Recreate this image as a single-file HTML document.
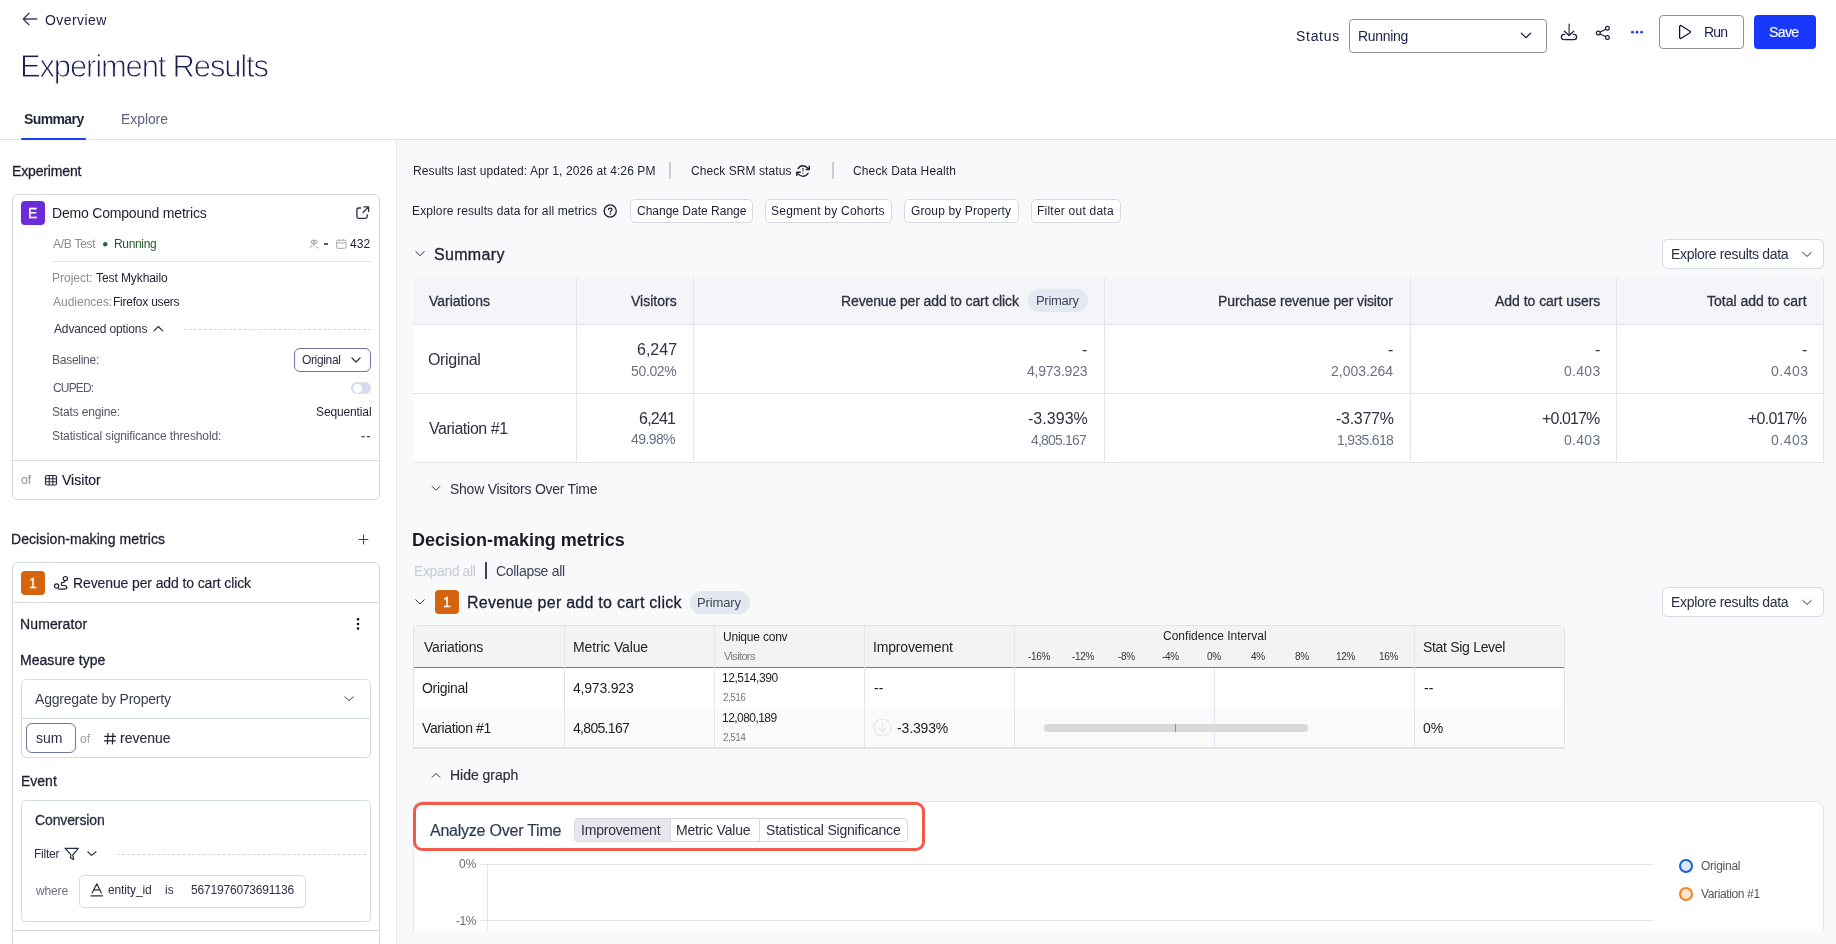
<!DOCTYPE html>
<html><head><meta charset="utf-8"><title>Experiment Results</title>
<style>
html,body{margin:0;padding:0;}
body{width:1836px;height:944px;position:relative;overflow:hidden;background:#ffffff;font-family:"Liberation Sans",sans-serif;}
.t{position:absolute;white-space:nowrap;will-change:transform;}
svg{display:block}
</style></head><body>
<div style="position:absolute;left:397px;top:140px;width:1439px;height:804px;background:#f8f9fb;"></div>
<div style="position:absolute;left:396px;top:140px;width:1px;height:804px;background:#e9ebf1;"></div>
<div style="position:absolute;left:0px;top:139px;width:1836px;height:1px;background:#dde1ee;"></div>
<svg style="position:absolute;left:22px;top:12px;overflow:visible;" width="16" height="14" viewBox="0 0 16 14"><path d="M14.8 7 H1.5 M7 1.2 L1.2 7 L7 12.8" fill="none" stroke="#3b3f63" stroke-width="1.3" stroke-linecap="round" stroke-linejoin="round"/></svg>
<div class="t" style="left:44.60px;top:13px;font-size:14px;line-height:14px;color:#1b1e47;letter-spacing:0.438px;">Overview</div>
<div class="t" style="left:20.00px;top:51px;font-size:31px;line-height:31px;color:#1c1f50;letter-spacing:-1.163px;-webkit-text-stroke:0.9px #ffffff;">Experiment Results</div>
<div class="t" style="left:23.70px;top:112px;font-size:14px;line-height:14px;color:#232838;font-weight:700;letter-spacing:-0.603px;">Summary</div>
<div class="t" style="left:120.60px;top:112px;font-size:14px;line-height:14px;color:#5c6482;letter-spacing:-0.080px;">Explore</div>
<div style="position:absolute;left:21px;top:137.6px;width:65px;height:2.4px;background:#1f3ff5;border-radius:1px;"></div>
<div class="t" style="left:1296.00px;top:29px;font-size:14px;line-height:14px;color:#1b1e47;letter-spacing:0.702px;">Status</div>
<div style="position:absolute;left:1349px;top:19px;width:198px;height:34px;box-sizing:border-box;border:1px solid #8f8f96;border-radius:4px;background:#fff;"></div>
<div class="t" style="left:1357.50px;top:29px;font-size:14px;line-height:14px;color:#1b1e47;letter-spacing:-0.328px;">Running</div>
<svg style="position:absolute;left:1520px;top:32px;overflow:visible;" width="12" height="7" viewBox="0 0 12 7"><path d="M1.3 1.2 L5.9 5.7 L10.5 1.2" fill="none" stroke="#1d2040" stroke-width="1.2" stroke-linecap="round" stroke-linejoin="round"/></svg>
<svg style="position:absolute;left:1560px;top:23px;overflow:visible;" width="18" height="18" viewBox="0 0 18 18"><path d="M9.1 1.1 V12.2" stroke="#1d2040" stroke-width="1.1" stroke-linecap="round"/><path d="M4.4 8.2 L9.1 12.5 L13.7 8.2" fill="none" stroke="#1d2040" stroke-width="1.3" stroke-linecap="round" stroke-linejoin="round"/><path d="M4.6 11.4 H4 A2.6 2.6 0 0 0 4 16.6 H14 A2.6 2.6 0 0 0 14 11.4 H13.3" fill="none" stroke="#1d2040" stroke-width="1.3" stroke-linecap="round"/><rect x="13.4" y="13.4" width="1.1" height="1.1" fill="#6a6c85"/></svg>
<svg style="position:absolute;left:1595px;top:25px;overflow:visible;" width="16" height="16" viewBox="0 0 16 16"><circle cx="3.3" cy="8.1" r="1.9" fill="none" stroke="#1d2040" stroke-width="1.25"/><circle cx="12.4" cy="3.3" r="1.9" fill="none" stroke="#1d2040" stroke-width="1.25"/><circle cx="12.4" cy="12.5" r="1.9" fill="none" stroke="#1d2040" stroke-width="1.25"/><path d="M5 7.2 L10.7 4.2 M5 9 L10.7 11.6" stroke="#1d2040" stroke-width="1.1"/></svg>
<svg style="position:absolute;left:1629px;top:30px;overflow:visible;" width="16" height="5" viewBox="0 0 16 5"><circle cx="3.4" cy="2.2" r="1.4" fill="#1f3ff5"/><circle cx="8" cy="2.2" r="1.4" fill="#1f3ff5"/><circle cx="12.6" cy="2.2" r="1.4" fill="#1f3ff5"/></svg>
<div style="position:absolute;left:1659px;top:15px;width:85px;height:34px;box-sizing:border-box;border:1px solid #8f8f96;border-radius:4px;background:#fff;"></div>
<svg style="position:absolute;left:1678px;top:24px;overflow:visible;" width="14" height="16" viewBox="0 0 14 16"><path d="M1.6 2.7 C1.6 1.7 2.5 1.2 3.3 1.7 L12 7.2 C12.6 7.6 12.6 8.4 12 8.8 L3.3 14.3 C2.5 14.8 1.6 14.3 1.6 13.3 Z" fill="none" stroke="#0f1238" stroke-width="1.3" stroke-linejoin="round"/></svg>
<div class="t" style="left:1704.00px;top:25px;font-size:14px;line-height:14px;color:#1b1e47;letter-spacing:-0.848px;">Run</div>
<div style="position:absolute;left:1754px;top:15px;width:62px;height:34px;background:#1838fb;border-radius:4px;"></div>
<div class="t" style="left:1769.40px;top:25px;font-size:14px;line-height:14px;color:#ffffff;letter-spacing:-0.608px;-webkit-text-stroke:0.15px #ffffff;">Save</div>
<div class="t" style="left:11.50px;top:164px;font-size:14px;line-height:14px;color:#1d2033;letter-spacing:-0.146px;-webkit-text-stroke:0.3px #1d2033;">Experiment</div>
<div style="position:absolute;left:12px;top:194px;width:368px;height:306px;box-sizing:border-box;border:1px solid #d5dbe3;border-radius:5px;background:#fff;"></div>
<div style="position:absolute;left:13px;top:460px;width:366px;height:1px;background:#d5dbe3;"></div>
<div style="position:absolute;left:21px;top:201px;width:24px;height:24px;background:#6c2bd9;border-radius:4px;"></div>
<div class="t" style="left:28.40px;top:206px;font-size:14px;line-height:14px;color:#ffffff;-webkit-text-stroke:0.3px #ffffff;">E</div>
<div class="t" style="left:52.40px;top:206px;font-size:14px;line-height:14px;color:#1d2033;letter-spacing:-0.196px;">Demo Compound metrics</div>
<svg style="position:absolute;left:355px;top:205px;overflow:visible;" width="15" height="15" viewBox="0 0 15 15"><path d="M5.6 3 H3.6 C2.6 3 1.9 3.7 1.9 4.7 V11.6 C1.9 12.6 2.6 13.3 3.6 13.3 H10.5 C11.5 13.3 12.2 12.6 12.2 11.6 V9.6" fill="none" stroke="#2a2f45" stroke-width="1.3" stroke-linecap="round"/><path d="M9 1.9 H13.6 V6.5 M13.4 2.1 L8 7.5" fill="none" stroke="#2a2f45" stroke-width="1.3" stroke-linecap="round" stroke-linejoin="round"/></svg>
<div class="t" style="left:53.40px;top:238px;font-size:12px;line-height:12px;color:#8a8c92;letter-spacing:-0.264px;">A/B Test</div>
<svg style="position:absolute;left:103px;top:242px;overflow:visible;" width="4.5" height="4.5" viewBox="0 0 4.5 4.5"><circle cx="2.25" cy="2.25" r="2.2" fill="#1f6b35"/></svg>
<div class="t" style="left:114.00px;top:238px;font-size:12px;line-height:12px;color:#1f5c2c;letter-spacing:-0.338px;">Running</div>
<svg style="position:absolute;left:308px;top:239px;overflow:visible;" width="12" height="10" viewBox="0 0 12 10"><rect x="3.3" y="1.2" width="3.6" height="3.6" rx="1.6" fill="none" stroke="#8f9198" stroke-width="0.9"/><rect x="5.6" y="1.2" width="3.4" height="3.6" rx="1.2" fill="none" stroke="#8f9198" stroke-width="0.9"/><path d="M1.6 8.8 L5 5.4 L7.5 7.6 M8.4 8.6 L10.8 8.8" fill="none" stroke="#9a9ca5" stroke-width="0.9"/></svg>
<div style="position:absolute;left:324px;top:243px;width:4px;height:2px;background:#555862;"></div>
<svg style="position:absolute;left:336px;top:239px;overflow:visible;" width="11" height="10" viewBox="0 0 11 10"><rect x="0.6" y="1.2" width="9.4" height="8.1" rx="1.2" fill="none" stroke="#a7a9b0" stroke-width="1"/><path d="M0.6 3.9 H10 M3.3 0.4 V1.8 M7.3 0.4 V1.8" stroke="#a7a9b0" stroke-width="1"/></svg>
<div class="t" style="left:350.30px;top:238px;font-size:12px;line-height:12px;color:#1d2033;letter-spacing:0.126px;">432</div>
<div style="position:absolute;left:53px;top:261px;width:318px;height:1px;background:#e2e6ec;"></div>
<div class="t" style="left:52.00px;top:272px;font-size:12px;line-height:12px;color:#8a8c92;">Project:</div>
<div class="t" style="left:96.00px;top:272px;font-size:12px;line-height:12px;color:#1d2033;letter-spacing:-0.085px;">Test Mykhailo</div>
<div class="t" style="left:53.00px;top:296px;font-size:12px;line-height:12px;color:#8a8c92;">Audiences:</div>
<div class="t" style="left:113.00px;top:296px;font-size:12px;line-height:12px;color:#1d2033;letter-spacing:-0.229px;">Firefox users</div>
<div class="t" style="left:54.20px;top:323px;font-size:12px;line-height:12px;color:#2a2f45;letter-spacing:-0.133px;">Advanced options</div>
<svg style="position:absolute;left:153px;top:325px;overflow:visible;" width="11" height="7" viewBox="0 0 11 7"><path d="M1 5.8 L5.3 1.5 L9.6 5.8" fill="none" stroke="#2a2f45" stroke-width="1.2" stroke-linecap="round" stroke-linejoin="round"/></svg>
<div style="position:absolute;left:184px;top:329px;width:187px;height:0;border-top:1px dashed #d5d9e2;"></div>
<div class="t" style="left:52.40px;top:354px;font-size:12px;line-height:12px;color:#545868;letter-spacing:-0.266px;">Baseline:</div>
<div style="position:absolute;left:294px;top:348px;width:77px;height:24px;box-sizing:border-box;border:1px solid #6e7799;border-radius:6px;background:#fff;"></div>
<div class="t" style="left:301.60px;top:354px;font-size:12px;line-height:12px;color:#2a2f45;letter-spacing:-0.355px;">Original</div>
<svg style="position:absolute;left:351px;top:357px;overflow:visible;" width="10" height="6" viewBox="0 0 10 6"><path d="M1 1 L5 5 L9 1" fill="none" stroke="#2a2f45" stroke-width="1.2" stroke-linecap="round" stroke-linejoin="round"/></svg>
<div class="t" style="left:53.40px;top:382px;font-size:12px;line-height:12px;color:#545868;letter-spacing:-0.841px;">CUPED:</div>
<div style="position:absolute;left:351px;top:382px;width:20px;height:12px;background:#d8dcea;border-radius:6px;"></div>
<div style="position:absolute;left:352.5px;top:383.5px;width:9px;height:9px;border-radius:50%;background:#fff;"></div>
<div class="t" style="left:52.40px;top:406px;font-size:12px;line-height:12px;color:#545868;letter-spacing:-0.168px;">Stats engine:</div>
<div class="t" style="left:315.70px;top:406px;font-size:12px;line-height:12px;color:#1d2033;letter-spacing:-0.127px;">Sequential</div>
<div class="t" style="left:52.40px;top:430px;font-size:12px;line-height:12px;color:#545868;letter-spacing:-0.120px;">Statistical significance threshold:</div>
<div class="t" style="left:361.00px;top:430px;font-size:12px;line-height:12px;color:#3a3f55;letter-spacing:1.504px;-webkit-text-stroke:0.3px #3a3f55;">--</div>
<div class="t" style="left:21.00px;top:474px;font-size:12px;line-height:12px;color:#8a8c92;">of</div>
<svg style="position:absolute;left:44px;top:474px;overflow:visible;" width="14" height="12" viewBox="0 0 14 12"><rect x="1.5" y="1.5" width="11" height="9.5" rx="1.5" fill="none" stroke="#2a2f45" stroke-width="1.2"/><path d="M1.5 4.8 H12.5 M1.5 7.8 H12.5 M5.2 1.5 V11 M8.8 1.5 V11" stroke="#2a2f45" stroke-width="1.1"/></svg>
<div class="t" style="left:62.30px;top:473px;font-size:14px;line-height:14px;color:#1d2033;letter-spacing:0.020px;-webkit-text-stroke:0.2px #1d2033;">Visitor</div>
<div class="t" style="left:11.00px;top:532px;font-size:14px;line-height:14px;color:#1d2033;letter-spacing:0.074px;-webkit-text-stroke:0.3px #1d2033;">Decision-making metrics</div>
<svg style="position:absolute;left:358px;top:534px;overflow:visible;" width="11" height="11" viewBox="0 0 11 11"><path d="M5.5 1 V10 M1 5.5 H10" stroke="#3a3f55" stroke-width="1.0" stroke-linecap="round"/></svg>
<div style="position:absolute;left:12px;top:562px;width:368px;height:400px;box-sizing:border-box;border:1px solid #d5dbe3;border-radius:5px;background:#fff;"></div>
<div style="position:absolute;left:13px;top:602px;width:366px;height:1px;background:#d5dbe3;"></div>
<div style="position:absolute;left:21px;top:571px;width:24px;height:24px;background:#d4650e;border-radius:4px;"></div>
<div class="t" style="left:29.00px;top:576px;font-size:14px;line-height:14px;color:#ffffff;-webkit-text-stroke:0.3px #ffffff;">1</div>
<svg style="position:absolute;left:50px;top:572px;overflow:visible;" width="24" height="22" viewBox="0 0 24 22"><circle cx="6.6" cy="14" r="2.1" fill="none" stroke="#1d2033" stroke-width="1.2"/><circle cx="15.3" cy="6.6" r="2.1" fill="none" stroke="#1d2033" stroke-width="1.2"/><path d="M8.4 17.1 H14.6 C17.6 17.1 17.6 13.5 14.8 13.5 H12.8 C10.6 13.5 10.6 10.3 12.8 10.3 H13.6 C14.6 10.3 14.8 9.5 14.9 8.7" fill="none" stroke="#1d2033" stroke-width="1.2" stroke-linecap="round" stroke-linejoin="round"/></svg>
<div class="t" style="left:72.50px;top:576px;font-size:14px;line-height:14px;color:#1d2033;letter-spacing:-0.118px;-webkit-text-stroke:0.15px #1d2033;">Revenue per add to cart click</div>
<div class="t" style="left:20.20px;top:617px;font-size:14px;line-height:14px;color:#1d2033;letter-spacing:0.116px;-webkit-text-stroke:0.3px #1d2033;">Numerator</div>
<svg style="position:absolute;left:355px;top:616px;overflow:visible;" width="6" height="16" viewBox="0 0 6 16"><circle cx="3" cy="3.3" r="1.25" fill="#111111"/><circle cx="3" cy="7.95" r="1.25" fill="#111111"/><circle cx="3" cy="12.6" r="1.25" fill="#111111"/></svg>
<div class="t" style="left:20.20px;top:653px;font-size:14px;line-height:14px;color:#1d2033;letter-spacing:0.042px;-webkit-text-stroke:0.3px #1d2033;">Measure type</div>
<div style="position:absolute;left:21px;top:679px;width:350px;height:79px;box-sizing:border-box;border:1px solid #d5dbe3;border-radius:5px;background:#fff;"></div>
<div style="position:absolute;left:22px;top:718px;width:348px;height:1px;background:#d5dbe3;"></div>
<div class="t" style="left:35.20px;top:692px;font-size:14px;line-height:14px;color:#3a3f55;letter-spacing:-0.204px;">Aggregate by Property</div>
<svg style="position:absolute;left:343px;top:695px;overflow:visible;" width="12" height="8" viewBox="0 0 12 8"><path d="M1.8 1.8 L6 5.6 L10.2 1.8" fill="none" stroke="#3a3f55" stroke-width="1.0" stroke-linecap="round" stroke-linejoin="round"/></svg>
<div style="position:absolute;left:26px;top:723px;width:49.5px;height:30px;box-sizing:border-box;border:1px solid #6e7799;border-radius:6px;background:#fff;"></div>
<div class="t" style="left:35.50px;top:731px;font-size:14px;line-height:14px;color:#2a2f45;">sum</div>
<div class="t" style="left:80.00px;top:733px;font-size:12px;line-height:12px;color:#9a9ca5;">of</div>
<svg style="position:absolute;left:103px;top:732px;overflow:visible;" width="14" height="14" viewBox="0 0 14 14"><path d="M5 1 L4.4 12.4 M10 1 L9.4 12.4 M1.3 4.4 H13 M1 8.8 H12.7" stroke="#1d2033" stroke-width="1.15"/></svg>
<div class="t" style="left:120.30px;top:731px;font-size:14px;line-height:14px;color:#2a2f45;letter-spacing:-0.018px;-webkit-text-stroke:0.15px #2a2f45;">revenue</div>
<div class="t" style="left:20.70px;top:774px;font-size:14px;line-height:14px;color:#1d2033;-webkit-text-stroke:0.3px #1d2033;">Event</div>
<div style="position:absolute;left:21px;top:800px;width:350px;height:122px;box-sizing:border-box;border:1px solid #d5dbe3;border-radius:5px;background:#fff;"></div>
<div class="t" style="left:35.30px;top:813px;font-size:14px;line-height:14px;color:#2a2f45;letter-spacing:-0.125px;-webkit-text-stroke:0.3px #2a2f45;">Conversion</div>
<div class="t" style="left:34.30px;top:848px;font-size:12px;line-height:12px;color:#2a2f45;letter-spacing:-0.234px;">Filter</div>
<svg style="position:absolute;left:64px;top:847px;overflow:visible;" width="16" height="14" viewBox="0 0 16 14"><path d="M1.2 1.3 H14.3 L8.8 7.8 L9.6 12.5 L6.4 10.8 L6.9 7.6 Z" fill="none" stroke="#2a2f45" stroke-width="1.25" stroke-linejoin="round"/></svg>
<svg style="position:absolute;left:86px;top:850px;overflow:visible;" width="11" height="7" viewBox="0 0 11 7"><path d="M1.8 1.8 L5.5 5.4 L10 1.8" fill="none" stroke="#2a2f45" stroke-width="1.2" stroke-linecap="round" stroke-linejoin="round"/></svg>
<div style="position:absolute;left:117px;top:854px;width:249px;height:0;border-top:1px dashed #d5d9e2;"></div>
<div class="t" style="left:35.60px;top:885px;font-size:12px;line-height:12px;color:#6b6f80;letter-spacing:-0.152px;">where</div>
<div style="position:absolute;left:78.5px;top:874.5px;width:227.5px;height:33px;box-sizing:border-box;border:1px solid #d5dbe3;border-radius:5px;background:#fff;"></div>
<svg style="position:absolute;left:90px;top:883px;overflow:visible;" width="14" height="14" viewBox="0 0 14 14"><path d="M2.2 10 L6.8 0.8 L11.4 10 M4 6.8 H9.6 M1 12.8 H12.6" fill="none" stroke="#2a2f45" stroke-width="1.2" stroke-linecap="round" stroke-linejoin="round"/></svg>
<div class="t" style="left:108.00px;top:884px;font-size:12px;line-height:12px;color:#2a2f45;letter-spacing:-0.128px;">entity_id</div>
<div class="t" style="left:164.80px;top:884px;font-size:12px;line-height:12px;color:#2a2f45;">is</div>
<div class="t" style="left:191.00px;top:884px;font-size:12px;line-height:12px;color:#2a2f45;letter-spacing:-0.188px;">5671976073691136</div>
<div style="position:absolute;left:13px;top:930px;width:366px;height:1px;background:#d5dbe3;"></div>
<div class="t" style="left:412.70px;top:165px;font-size:12px;line-height:12px;color:#1d2033;letter-spacing:0.100px;">Results last updated: Apr 1, 2026 at 4:26 PM</div>
<div style="position:absolute;left:669px;top:162px;width:1.5px;height:17px;background:#c9ccd6;"></div>
<div class="t" style="left:690.60px;top:165px;font-size:12px;line-height:12px;color:#1d2033;letter-spacing:0.069px;">Check SRM status</div>
<svg style="position:absolute;left:792px;top:160px;overflow:visible;" width="24" height="22" viewBox="0 0 24 22"><path d="M6.1 8.6 C7.8 5.2 12.8 4.4 16.3 8.6 M16.1 13.3 C14.4 16.8 9.4 17.6 5.7 13.6" fill="none" stroke="#1d2033" stroke-width="1.3" stroke-linecap="round"/><path d="M17.3 6.2 V9.5 H14.2 M4.8 15.6 V12.3 H8.3" fill="none" stroke="#1d2033" stroke-width="1.4" stroke-linecap="round" stroke-linejoin="round"/><path d="M11 8.3 V11.2" stroke="#3a3f55" stroke-width="1.1" stroke-linecap="round"/><circle cx="11" cy="13.6" r="0.65" fill="#3a3f55"/></svg>
<div style="position:absolute;left:832px;top:162px;width:1.5px;height:17px;background:#c9ccd6;"></div>
<div class="t" style="left:853.30px;top:165px;font-size:12px;line-height:12px;color:#1d2033;letter-spacing:0.141px;">Check Data Health</div>
<div class="t" style="left:412.00px;top:205px;font-size:12px;line-height:12px;color:#1d2033;letter-spacing:0.125px;">Explore results data for all metrics</div>
<svg style="position:absolute;left:602px;top:203px;overflow:visible;" width="16" height="16" viewBox="0 0 16 16"><circle cx="8.2" cy="8" r="6.1" fill="none" stroke="#1d2033" stroke-width="1.3"/><path d="M6.4 6.6 C6.4 5.5 7.2 5 8.2 5 C9.2 5 10 5.6 10 6.5 C10 7.6 8.4 7.6 8.4 9" fill="none" stroke="#1d2033" stroke-width="1.25" stroke-linecap="round"/><circle cx="8.4" cy="11" r="0.75" fill="#1d2033"/></svg>
<div style="position:absolute;left:630px;top:199px;width:123px;height:24px;box-sizing:border-box;border:1px solid #d5d9e2;border-radius:5px;background:#fff;"></div>
<div class="t" style="left:636.60px;top:205px;font-size:12px;line-height:12px;color:#1d2033;">Change Date Range</div>
<div style="position:absolute;left:765px;top:199px;width:126.5px;height:24px;box-sizing:border-box;border:1px solid #d5d9e2;border-radius:5px;background:#fff;"></div>
<div class="t" style="left:771.00px;top:205px;font-size:12px;line-height:12px;color:#1d2033;letter-spacing:0.242px;">Segment by Cohorts</div>
<div style="position:absolute;left:904px;top:199px;width:115px;height:24px;box-sizing:border-box;border:1px solid #d5d9e2;border-radius:5px;background:#fff;"></div>
<div class="t" style="left:911.00px;top:205px;font-size:12px;line-height:12px;color:#1d2033;letter-spacing:0.122px;">Group by Property</div>
<div style="position:absolute;left:1031px;top:199px;width:89.5px;height:24px;box-sizing:border-box;border:1px solid #d5d9e2;border-radius:5px;background:#fff;"></div>
<div class="t" style="left:1036.70px;top:205px;font-size:12px;line-height:12px;color:#1d2033;letter-spacing:0.229px;">Filter out data</div>
<svg style="position:absolute;left:414px;top:250px;overflow:visible;" width="12" height="8" viewBox="0 0 12 8"><path d="M1.8 1.5 L6 5.7 L10.2 1.5" fill="none" stroke="#2a2f45" stroke-width="1.0" stroke-linecap="round" stroke-linejoin="round"/></svg>
<div class="t" style="left:434.20px;top:247px;font-size:16px;line-height:16px;color:#1d2033;letter-spacing:0.324px;-webkit-text-stroke:0.3px #1d2033;">Summary</div>
<div style="position:absolute;left:1662px;top:239px;width:162px;height:30px;box-sizing:border-box;border:1px solid #d5d9e2;border-radius:6px;background:#fff;"></div>
<div class="t" style="left:1670.70px;top:247px;font-size:14px;line-height:14px;color:#2a2f45;letter-spacing:-0.329px;">Explore results data</div>
<svg style="position:absolute;left:1801px;top:251px;overflow:visible;" width="12" height="7" viewBox="0 0 12 7"><path d="M1.7 1.4 L6 5.4 L10.3 1.4" fill="none" stroke="#2a2f45" stroke-width="1.0" stroke-linecap="round" stroke-linejoin="round"/></svg>
<div style="position:absolute;left:413px;top:277px;width:1411px;height:186px;background:#fff;"></div>
<div style="position:absolute;left:413px;top:277px;width:1411px;height:47px;background:#f4f5f9;"></div>
<div style="position:absolute;left:413px;top:324px;width:1411px;height:1px;background:#e1e4ea;"></div>
<div style="position:absolute;left:413px;top:393px;width:1411px;height:1px;background:#e4e6eb;"></div>
<div style="position:absolute;left:413px;top:462px;width:1411px;height:1px;background:#e4e6eb;"></div>
<div style="position:absolute;left:576px;top:277px;width:1px;height:186px;background:#e4e6eb;"></div>
<div style="position:absolute;left:693px;top:277px;width:1px;height:186px;background:#e4e6eb;"></div>
<div style="position:absolute;left:1104px;top:277px;width:1px;height:186px;background:#e4e6eb;"></div>
<div style="position:absolute;left:1410px;top:277px;width:1px;height:186px;background:#e4e6eb;"></div>
<div style="position:absolute;left:1616px;top:277px;width:1px;height:186px;background:#e4e6eb;"></div>
<div style="position:absolute;left:1823px;top:277px;width:1px;height:186px;background:#e4e6eb;"></div>
<div class="t" style="left:429.20px;top:294px;font-size:14px;line-height:14px;color:#2d3142;letter-spacing:-0.035px;-webkit-text-stroke:0.3px #2d3142;">Variations</div>
<div class="t" style="left:631.00px;top:294px;font-size:14px;line-height:14px;color:#2d3142;-webkit-text-stroke:0.3px #2d3142;">Visitors</div>
<div class="t" style="left:841.20px;top:294px;font-size:14px;line-height:14px;color:#2d3142;letter-spacing:-0.122px;-webkit-text-stroke:0.3px #2d3142;">Revenue per add to cart click</div>
<div style="position:absolute;left:1028px;top:289px;width:59.5px;height:23px;background:#e3e8f0;border-radius:12px;"></div>
<div class="t" style="left:1035.50px;top:294px;font-size:13px;line-height:13px;color:#3f4859;letter-spacing:-0.296px;">Primary</div>
<div class="t" style="left:1218.00px;top:294px;font-size:14px;line-height:14px;color:#2d3142;letter-spacing:-0.124px;-webkit-text-stroke:0.3px #2d3142;">Purchase revenue per visitor</div>
<div class="t" style="left:1494.90px;top:294px;font-size:14px;line-height:14px;color:#2d3142;letter-spacing:-0.033px;-webkit-text-stroke:0.3px #2d3142;">Add to cart users</div>
<div class="t" style="left:1707.40px;top:294px;font-size:14px;line-height:14px;color:#2d3142;-webkit-text-stroke:0.3px #2d3142;">Total add to cart</div>
<div class="t" style="left:428.20px;top:352px;font-size:16px;line-height:16px;color:#2d3142;letter-spacing:-0.325px;">Original</div>
<div class="t" style="left:636.70px;top:342px;font-size:16px;line-height:16px;color:#2d3142;letter-spacing:0.015px;">6,247</div>
<div class="t" style="left:630.90px;top:364px;font-size:14px;line-height:14px;color:#6b7185;letter-spacing:-0.347px;">50.02%</div>
<div class="t" style="left:429.20px;top:421px;font-size:16px;line-height:16px;color:#2d3142;letter-spacing:-0.464px;">Variation #1</div>
<div class="t" style="left:639.40px;top:411px;font-size:16px;line-height:16px;color:#2d3142;letter-spacing:-0.760px;">6,241</div>
<div class="t" style="left:631.30px;top:432px;font-size:14px;line-height:14px;color:#6b7185;letter-spacing:-0.587px;">49.98%</div>
<div class="t" style="left:1082.00px;top:342px;font-size:16px;line-height:16px;color:#2d3142;">-</div>
<div class="t" style="left:1027.10px;top:364px;font-size:14px;line-height:14px;color:#6b7185;letter-spacing:-0.225px;">4,973.923</div>
<div class="t" style="left:1027.80px;top:411px;font-size:16px;line-height:16px;color:#2d3142;letter-spacing:0.039px;">-3.393%</div>
<div class="t" style="left:1031.30px;top:433px;font-size:14px;line-height:14px;color:#6b7185;letter-spacing:-0.800px;">4,805.167</div>
<div class="t" style="left:1388.40px;top:342px;font-size:16px;line-height:16px;color:#2d3142;">-</div>
<div class="t" style="left:1331.30px;top:364px;font-size:14px;line-height:14px;color:#6b7185;letter-spacing:-0.025px;">2,003.264</div>
<div class="t" style="left:1335.50px;top:411px;font-size:16px;line-height:16px;color:#2d3142;letter-spacing:-0.278px;">-3.377%</div>
<div class="t" style="left:1336.70px;top:433px;font-size:14px;line-height:14px;color:#6b7185;letter-spacing:-0.675px;">1,935.618</div>
<div class="t" style="left:1595.00px;top:342px;font-size:16px;line-height:16px;color:#2d3142;">-</div>
<div class="t" style="left:1564.20px;top:364px;font-size:14px;line-height:14px;color:#6b7185;letter-spacing:0.288px;">0.403</div>
<div class="t" style="left:1542.00px;top:411px;font-size:16px;line-height:16px;color:#2d3142;letter-spacing:-0.897px;">+0.017%</div>
<div class="t" style="left:1564.20px;top:433px;font-size:14px;line-height:14px;color:#6b7185;letter-spacing:0.288px;">0.403</div>
<div class="t" style="left:1802.00px;top:342px;font-size:16px;line-height:16px;color:#2d3142;">-</div>
<div class="t" style="left:1770.60px;top:364px;font-size:14px;line-height:14px;color:#6b7185;letter-spacing:0.488px;">0.403</div>
<div class="t" style="left:1748.40px;top:411px;font-size:16px;line-height:16px;color:#2d3142;letter-spacing:-0.764px;">+0.017%</div>
<div class="t" style="left:1770.60px;top:433px;font-size:14px;line-height:14px;color:#6b7185;letter-spacing:0.488px;">0.403</div>
<svg style="position:absolute;left:431px;top:485px;overflow:visible;" width="11" height="7" viewBox="0 0 11 7"><path d="M1.2 1.5 L5 5.3 L8.8 1.5" fill="none" stroke="#2a2f45" stroke-width="1.0" stroke-linecap="round" stroke-linejoin="round"/></svg>
<div class="t" style="left:450.20px;top:482px;font-size:14px;line-height:14px;color:#2d3142;letter-spacing:-0.253px;">Show Visitors Over Time</div>
<div class="t" style="left:412.20px;top:531px;font-size:18px;line-height:18px;color:#1c1d24;font-weight:700;letter-spacing:-0.012px;">Decision-making metrics</div>
<div class="t" style="left:413.50px;top:564px;font-size:14px;line-height:14px;color:#c5cad8;letter-spacing:-0.397px;">Expand all</div>
<div style="position:absolute;left:485px;top:562px;width:2px;height:17px;background:#3d4258;"></div>
<div class="t" style="left:496.30px;top:564px;font-size:14px;line-height:14px;color:#3d4258;letter-spacing:-0.297px;">Collapse all</div>
<svg style="position:absolute;left:414px;top:598px;overflow:visible;" width="12" height="8" viewBox="0 0 12 8"><path d="M1.8 1.8 L6 6 L10.2 1.8" fill="none" stroke="#2a2f45" stroke-width="1.0" stroke-linecap="round" stroke-linejoin="round"/></svg>
<div style="position:absolute;left:435px;top:590px;width:24px;height:24px;background:#d4650e;border-radius:4px;"></div>
<div class="t" style="left:442.50px;top:595px;font-size:14px;line-height:14px;color:#ffffff;-webkit-text-stroke:0.3px #ffffff;">1</div>
<div class="t" style="left:466.60px;top:595px;font-size:16px;line-height:16px;color:#1d2033;letter-spacing:0.260px;-webkit-text-stroke:0.3px #1d2033;">Revenue per add to cart click</div>
<div style="position:absolute;left:690px;top:591px;width:60px;height:23px;background:#e3e8f0;border-radius:12px;"></div>
<div class="t" style="left:697.00px;top:596px;font-size:13px;line-height:13px;color:#3f4859;letter-spacing:-0.146px;">Primary</div>
<div style="position:absolute;left:1662px;top:587px;width:162px;height:30px;box-sizing:border-box;border:1px solid #d5d9e2;border-radius:6px;background:#fff;"></div>
<div class="t" style="left:1670.70px;top:595px;font-size:14px;line-height:14px;color:#2a2f45;letter-spacing:-0.329px;">Explore results data</div>
<svg style="position:absolute;left:1801px;top:599px;overflow:visible;" width="12" height="7" viewBox="0 0 12 7"><path d="M1.7 1.4 L6 5.4 L10.3 1.4" fill="none" stroke="#2a2f45" stroke-width="1.0" stroke-linecap="round" stroke-linejoin="round"/></svg>
<div style="position:absolute;left:413px;top:625px;width:1152px;height:123px;box-sizing:border-box;border:1px solid #e3e3e3;border-radius:4px;background:#fff;overflow:hidden;"></div>
<div style="position:absolute;left:414px;top:626px;width:1150px;height:41px;background:#f3f3f4;border-radius:3px 3px 0 0;"></div>
<div style="position:absolute;left:414px;top:667px;width:1150px;height:1px;background:#7d7d7d;"></div>
<div style="position:absolute;left:414px;top:708px;width:1150px;height:39px;background:#fafafa;"></div>
<div style="position:absolute;left:413px;top:746.5px;width:1152px;height:2px;background:#e2e2e2;"></div>
<div style="position:absolute;left:564px;top:626px;width:1px;height:121px;background:#e6e6e6;"></div>
<div style="position:absolute;left:714px;top:626px;width:1px;height:121px;background:#e6e6e6;"></div>
<div style="position:absolute;left:864px;top:626px;width:1px;height:121px;background:#e6e6e6;"></div>
<div style="position:absolute;left:1014px;top:626px;width:1px;height:121px;background:#e6e6e6;"></div>
<div style="position:absolute;left:1414px;top:626px;width:1px;height:121px;background:#e6e6e6;"></div>
<div class="t" style="left:424.30px;top:640px;font-size:14px;line-height:14px;color:#1f1f1f;letter-spacing:-0.224px;">Variations</div>
<div class="t" style="left:573.30px;top:640px;font-size:14px;line-height:14px;color:#1f1f1f;letter-spacing:-0.153px;">Metric Value</div>
<div class="t" style="left:723.00px;top:631px;font-size:12px;line-height:12px;color:#1f1f1f;letter-spacing:-0.211px;">Unique conv</div>
<div class="t" style="left:724.00px;top:651px;font-size:11px;line-height:11px;color:#7a7a7a;letter-spacing:-0.638px;">Visitors</div>
<div class="t" style="left:873.00px;top:640px;font-size:14px;line-height:14px;color:#1f1f1f;letter-spacing:-0.181px;">Improvement</div>
<div class="t" style="left:1163.00px;top:630px;font-size:12px;line-height:12px;color:#1f1f1f;letter-spacing:0.015px;">Confidence Interval</div>
<div class="t" style="left:1027.80px;top:652px;font-size:10px;line-height:10px;color:#333333;letter-spacing:-0.350px;">-16%</div>
<div class="t" style="left:1071.62px;top:652px;font-size:10px;line-height:10px;color:#333333;letter-spacing:-0.350px;">-12%</div>
<div class="t" style="left:1117.94px;top:652px;font-size:10px;line-height:10px;color:#333333;letter-spacing:-0.350px;">-8%</div>
<div class="t" style="left:1161.76px;top:652px;font-size:10px;line-height:10px;color:#333333;letter-spacing:-0.350px;">-4%</div>
<div class="t" style="left:1207.08px;top:652px;font-size:10px;line-height:10px;color:#333333;letter-spacing:-0.350px;">0%</div>
<div class="t" style="left:1250.90px;top:652px;font-size:10px;line-height:10px;color:#333333;letter-spacing:-0.350px;">4%</div>
<div class="t" style="left:1294.72px;top:652px;font-size:10px;line-height:10px;color:#333333;letter-spacing:-0.350px;">8%</div>
<div class="t" style="left:1335.54px;top:652px;font-size:10px;line-height:10px;color:#333333;letter-spacing:-0.350px;">12%</div>
<div class="t" style="left:1379.36px;top:652px;font-size:10px;line-height:10px;color:#333333;letter-spacing:-0.350px;">16%</div>
<div class="t" style="left:1422.50px;top:640px;font-size:14px;line-height:14px;color:#1f1f1f;letter-spacing:-0.306px;">Stat Sig Level</div>
<div style="position:absolute;left:1214px;top:668px;width:1px;height:79px;background:#dfe4f7;"></div>
<div class="t" style="left:422.00px;top:681px;font-size:14px;line-height:14px;color:#1f1f1f;letter-spacing:-0.304px;">Original</div>
<div class="t" style="left:573.40px;top:681px;font-size:14px;line-height:14px;color:#1f1f1f;letter-spacing:-0.200px;">4,973.923</div>
<div class="t" style="left:722.00px;top:672px;font-size:12px;line-height:12px;color:#1f1f1f;letter-spacing:-0.443px;">12,514,390</div>
<div class="t" style="left:723.00px;top:693px;font-size:10px;line-height:10px;color:#7a7a7a;letter-spacing:-0.566px;">2,516</div>
<div class="t" style="left:874.00px;top:681px;font-size:14px;line-height:14px;color:#1f1f1f;">--</div>
<div class="t" style="left:1423.50px;top:681px;font-size:14px;line-height:14px;color:#1f1f1f;">--</div>
<div class="t" style="left:422.00px;top:721px;font-size:14px;line-height:14px;color:#1f1f1f;letter-spacing:-0.399px;">Variation #1</div>
<div class="t" style="left:573.40px;top:721px;font-size:14px;line-height:14px;color:#1f1f1f;letter-spacing:-0.687px;">4,805.167</div>
<div class="t" style="left:722.00px;top:712px;font-size:12px;line-height:12px;color:#1f1f1f;letter-spacing:-0.543px;">12,080,189</div>
<div class="t" style="left:723.00px;top:733px;font-size:10px;line-height:10px;color:#7a7a7a;letter-spacing:-0.566px;">2,514</div>
<svg style="position:absolute;left:873px;top:718px;overflow:visible;" width="19" height="19" viewBox="0 0 19 19"><circle cx="9.5" cy="9.5" r="8.5" fill="none" stroke="#e6e6e6" stroke-width="1.2"/><path d="M9.5 5 V13.5 M6.3 10.5 L9.5 13.7 L12.7 10.5" fill="none" stroke="#e6e6e6" stroke-width="1.2" stroke-linecap="round" stroke-linejoin="round"/></svg>
<div class="t" style="left:897.00px;top:721px;font-size:14px;line-height:14px;color:#1f1f1f;letter-spacing:-0.149px;">-3.393%</div>
<div style="position:absolute;left:1044px;top:724px;width:263.5px;height:8px;background:#d9d9d9;border-radius:4px;"></div>
<div style="position:absolute;left:1175px;top:724px;width:1.2px;height:8px;background:#8c8c8c;"></div>
<div class="t" style="left:1422.60px;top:721px;font-size:14px;line-height:14px;color:#1f1f1f;">0%</div>
<svg style="position:absolute;left:431px;top:771px;overflow:visible;" width="11" height="8" viewBox="0 0 11 8"><path d="M1.2 6.2 L5 2.4 L8.8 6.2" fill="none" stroke="#2a2f45" stroke-width="1.0" stroke-linecap="round" stroke-linejoin="round"/></svg>
<div class="t" style="left:450.20px;top:768px;font-size:14px;line-height:14px;color:#2d3142;letter-spacing:-0.034px;-webkit-text-stroke:0.2px #2d3142;">Hide graph</div>
<div style="position:absolute;left:413px;top:801px;width:1411px;height:130px;overflow:hidden;"><div style="position:absolute;left:0;top:0;width:1411px;height:200px;box-sizing:border-box;border:1px solid #e2e4ea;border-radius:8px;background:#fff;"></div></div>
<div style="position:absolute;left:412.5px;top:801.5px;width:512px;height:49px;box-sizing:border-box;border:3px solid #f25a4b;border-radius:9px;"></div>
<div class="t" style="left:430.30px;top:823px;font-size:16px;line-height:16px;color:#2e3a55;letter-spacing:-0.234px;-webkit-text-stroke:0.2px #2e3a55;">Analyze Over Time</div>
<div style="position:absolute;left:574px;top:818px;width:334px;height:24px;box-sizing:border-box;border:1px solid #d5d9e2;border-radius:4px;background:#fff;"></div>
<div style="position:absolute;left:575px;top:819px;width:94.5px;height:22px;background:#e6e8ee;border-radius:3px 0 0 3px;"></div>
<div style="position:absolute;left:669.5px;top:819px;width:1px;height:22px;background:#d5d9e2;"></div>
<div style="position:absolute;left:758.5px;top:819px;width:1px;height:22px;background:#d5d9e2;"></div>
<div class="t" style="left:581.40px;top:823px;font-size:14px;line-height:14px;color:#2d3142;letter-spacing:-0.211px;">Improvement</div>
<div class="t" style="left:676.10px;top:823px;font-size:14px;line-height:14px;color:#2d3142;letter-spacing:-0.198px;">Metric Value</div>
<div class="t" style="left:765.70px;top:823px;font-size:14px;line-height:14px;color:#2d3142;letter-spacing:-0.200px;">Statistical Significance</div>
<div style="position:absolute;left:480px;top:864px;width:1174px;height:1px;background:#e6e6e6;"></div>
<div style="position:absolute;left:480px;top:920px;width:1174px;height:1px;background:#e6e6e6;"></div>
<div style="position:absolute;left:487px;top:864px;width:1px;height:67px;background:#e6e6e6;"></div>
<div class="t" style="left:459.20px;top:858px;font-size:12px;line-height:12px;color:#6b6b6b;">0%</div>
<div class="t" style="left:456.20px;top:915px;font-size:12px;line-height:12px;color:#6b6b6b;letter-spacing:-0.500px;">-1%</div>
<div style="position:absolute;left:1679px;top:859px;width:14px;height:14px;box-sizing:border-box;border:2px solid #1a5fd6;border-radius:50%;background:#dce7f8;"></div>
<div class="t" style="left:1701.00px;top:860px;font-size:12px;line-height:12px;color:#555555;letter-spacing:-0.269px;">Original</div>
<div style="position:absolute;left:1679px;top:887px;width:14px;height:14px;box-sizing:border-box;border:2px solid #f5821f;border-radius:50%;background:#fde6d3;"></div>
<div class="t" style="left:1701.00px;top:888px;font-size:12px;line-height:12px;color:#555555;letter-spacing:-0.371px;">Variation #1</div>
</body></html>
